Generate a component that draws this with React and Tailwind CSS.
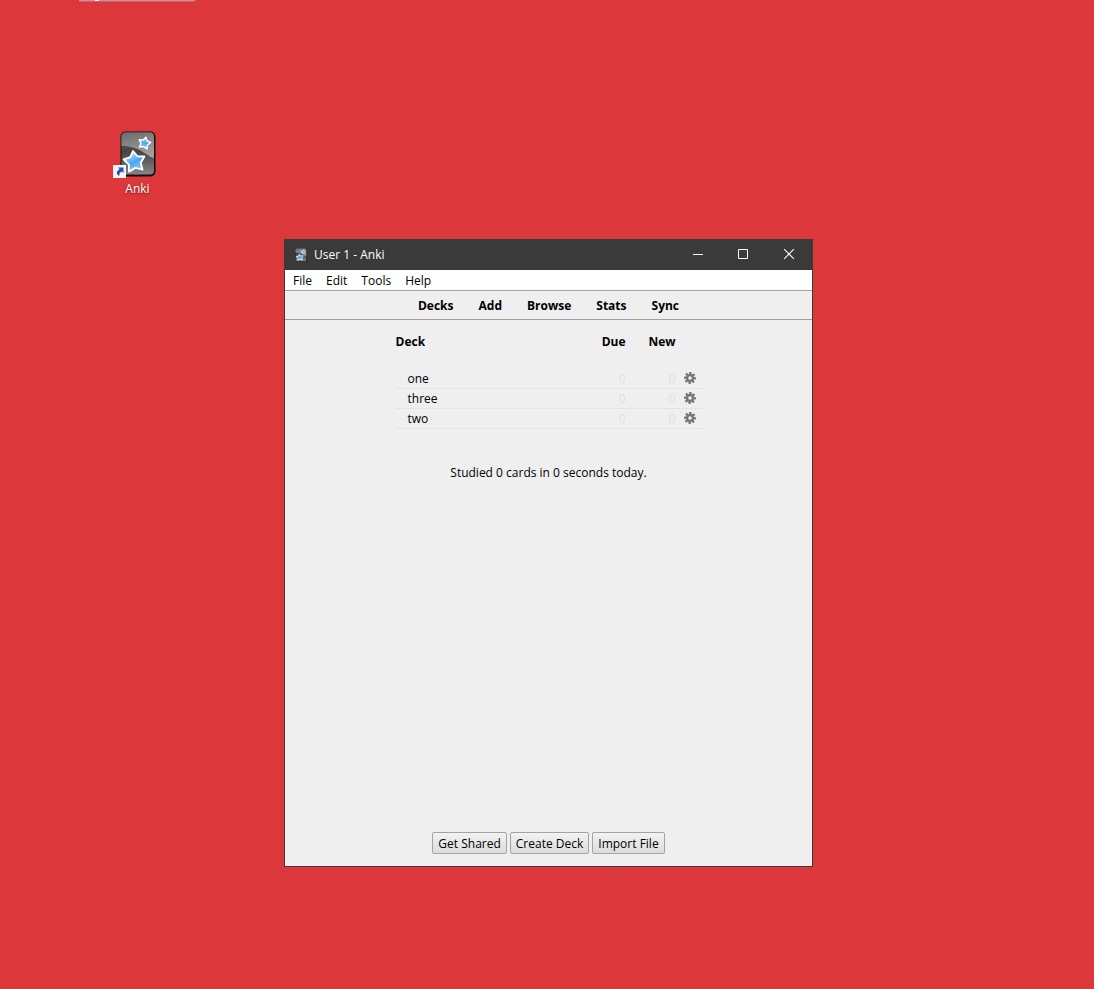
import React from "react";

const menus = ["File", "Edit", "Tools", "Help"];
const links = ["Decks", "Add", "Browse", "Stats", "Sync"];
const decks = ["one", "three", "two"];
const actions = ["Get Shared", "Create Deck", "Import File"];

const STAR = "M0 -10.5 L3.6 -4.8 L10.5 -3.6 L6 2.2 L6.8 9.2 L0 6.4 L-6.8 9.2 L-6 2.2 L-10.5 -3.6 L-3.6 -4.8 Z";

function AnkiLogo({ id, className }) {
  return (
    <svg viewBox="0 0 36 46" preserveAspectRatio="none" className={className} aria-hidden="true">
      <defs>
        <linearGradient id={id + "-body"} x1="0" y1="0" x2="0" y2="1">
          <stop offset="0" stopColor="#5c5c5c" />
          <stop offset="0.45" stopColor="#454545" />
          <stop offset="1" stopColor="#858585" />
        </linearGradient>
        <linearGradient id={id + "-gloss"} x1="0" y1="0" x2="0.3" y2="1">
          <stop offset="0" stopColor="#6c6c6c" />
          <stop offset="1" stopColor="#a0a0a0" />
        </linearGradient>
        <linearGradient id={id + "-star"} x1="0.3" y1="0" x2="0.6" y2="1">
          <stop offset="0" stopColor="#c4e4fb" />
          <stop offset="0.55" stopColor="#4aa5ef" />
          <stop offset="1" stopColor="#8accf8" />
        </linearGradient>
      </defs>
      <rect x="0.5" y="0.5" width="35" height="45" rx="5" fill="#101010" />
      <rect x="1.5" y="1.5" width="32.5" height="42" rx="4" fill={"url(#" + id + "-body)"} />
      <path d="M1.5 15 V6 Q1.5 1.5 6 1.5 H30 Q34 1.5 34 6 V27 C26 25 20 15 1.5 15 Z" fill={"url(#" + id + "-gloss)"} />
      <g transform="translate(14.5 30.5) rotate(-8)" strokeLinejoin="round">
        <path d={STAR} fill={"url(#" + id + "-star)"} stroke="#fff" strokeWidth="1.9" />
      </g>
      <g transform="translate(24.5 12) rotate(14) scale(0.56)" strokeLinejoin="round">
        <path d={STAR} fill={"url(#" + id + "-star)"} stroke="#fff" strokeWidth="2.6" />
      </g>
    </svg>
  );
}

function Gear() {
  return (
    <svg viewBox="-6 -6 12 12" className="block size-3" aria-hidden="true">
      <g fill="#777">
        {[0, 45, 90, 135].map((a) => (
          <rect key={a} x="-1.2" y="-6" width="2.4" height="12" transform={"rotate(" + (a + 4) + ")"} />
        ))}
        <circle r="4.1" />
      </g>
      <circle r="1.8" fill="#efefef" />
    </svg>
  );
}

function DesktopShortcut() {
  return (
    <a href="#anki" className="absolute left-[100px] top-[131px] flex w-[75px] flex-col items-center text-white">
      <span className="relative block">
        <AnkiLogo id="shortcut" className="block h-[46px] w-9" />
        <svg viewBox="0 0 13 13" className="absolute -left-[7px] -bottom-px size-[13px]" aria-hidden="true">
          <rect width="13" height="13" fill="#f4f4f4" />
          <path d="M5 2.5 H10.5 V8 L8.8 6.4 C6.8 7.4 6 8.8 6.4 11 C3 9.5 3 6 6.7 4.3 Z" fill="#1f57a8" />
        </svg>
      </span>
      <span className="mt-1 leading-4 [text-shadow:0_1px_2px_rgba(0,0,0,0.5)]">Anki</span>
    </a>
  );
}

function TitleBar() {
  return (
    <header className="flex h-[30px] items-center bg-[#3a3a3a] pl-2.5 text-white">
      <AnkiLogo id="title" className="block h-3.5 w-3" />
      <h1 className="ml-[7px] flex-1">User 1 - Anki</h1>
      <div className="flex h-7 self-start">
        <button aria-label="Minimize" className="flex w-[45px] items-center justify-center">
          <svg viewBox="0 0 10 10" className="size-2.5"><path d="M0 5.5 H10" stroke="#fff" /></svg>
        </button>
        <button aria-label="Maximize" className="flex w-[46px] items-center justify-center">
          <svg viewBox="0 0 10 10" className="size-2.5"><path d="M0.5 0.5 H9.5 V9.5 H0.5 Z" fill="none" stroke="#fff" /></svg>
        </button>
        <button aria-label="Close" className="flex w-[46px] items-center justify-center">
          <svg viewBox="0 0 10 10" className="size-2.5"><path d="M0 0 L10 10 M10 0 L0 10" stroke="#fff" strokeWidth="1.1" /></svg>
        </button>
      </div>
    </header>
  );
}

export default function App() {
  return (
    <div className="relative min-h-screen overflow-hidden bg-[#dc373a] font-['Open_Sans','Noto_Sans',sans-serif] text-[12px] leading-4 text-black">
      <div className="absolute left-[79px] top-0 h-0.5 w-[116px] border-b border-[#c9606c] bg-[#cf8a9e]">
        <div className="ml-4 h-px w-1 bg-white" />
      </div>

      <DesktopShortcut />

      <main className="absolute left-[284px] top-[239px] flex min-h-[628px] w-[529px] flex-col border border-[#3a3a3a] bg-[#efefef]">
        <TitleBar />
        <nav aria-label="Menu" className="flex h-[21px] items-center gap-3.5 border-b border-[#a0a0a0] bg-white px-2 pt-0.5">
          {menus.map((m) => (
            <button key={m}>{m}</button>
          ))}
        </nav>
        <nav aria-label="Main" className="flex h-[29px] items-center justify-center gap-[25px] border-b border-[#a0a0a0] pt-0.5 font-bold">
          {links.map((l) => (
            <a key={l} href={"#" + l.toLowerCase()}>{l}</a>
          ))}
        </nav>

        <section className="flex flex-1 flex-col items-center">
          <table className="mt-2 w-[308px] table-fixed border-collapse">
            <colgroup>
              <col />
              <col className="w-[50px]" />
              <col className="w-[50px]" />
              <col className="w-[27px]" />
            </colgroup>
            <thead>
              <tr className="h-10 align-top">
                <th className="pl-px pt-1.5 text-left">Deck</th>
                <th className="pt-1.5 text-right">Due</th>
                <th className="pt-1.5 text-right">New</th>
                <td />
              </tr>
            </thead>
            <tbody>
              {decks.map((d) => (
                <tr key={d} className="h-5 border-b border-[#e4e4e4]">
                  <td className="pl-[13px] pt-0.5"><a href={"#" + d}>{d}</a></td>
                  <td className="pt-0.5 text-right text-[#e0e0e0]">0</td>
                  <td className="pt-0.5 text-right text-[#e0e0e0]">0</td>
                  <td className="pl-2">
                    <button aria-label={"Options for " + d} className="block"><Gear /></button>
                  </td>
                </tr>
              ))}
            </tbody>
          </table>
          <p className="mt-9">Studied 0 cards in 0 seconds today.</p>
        </section>

        <footer className="flex justify-center gap-[3px] pb-3">
          {actions.map((a) => (
            <button key={a} className="h-[22px] rounded-[2px] border border-[#a3a3a3] bg-linear-to-b from-[#f3f3f3] to-[#dcdcdc] px-[5px] pt-0.5">
              {a}
            </button>
          ))}
        </footer>
      </main>
    </div>
  );
}
